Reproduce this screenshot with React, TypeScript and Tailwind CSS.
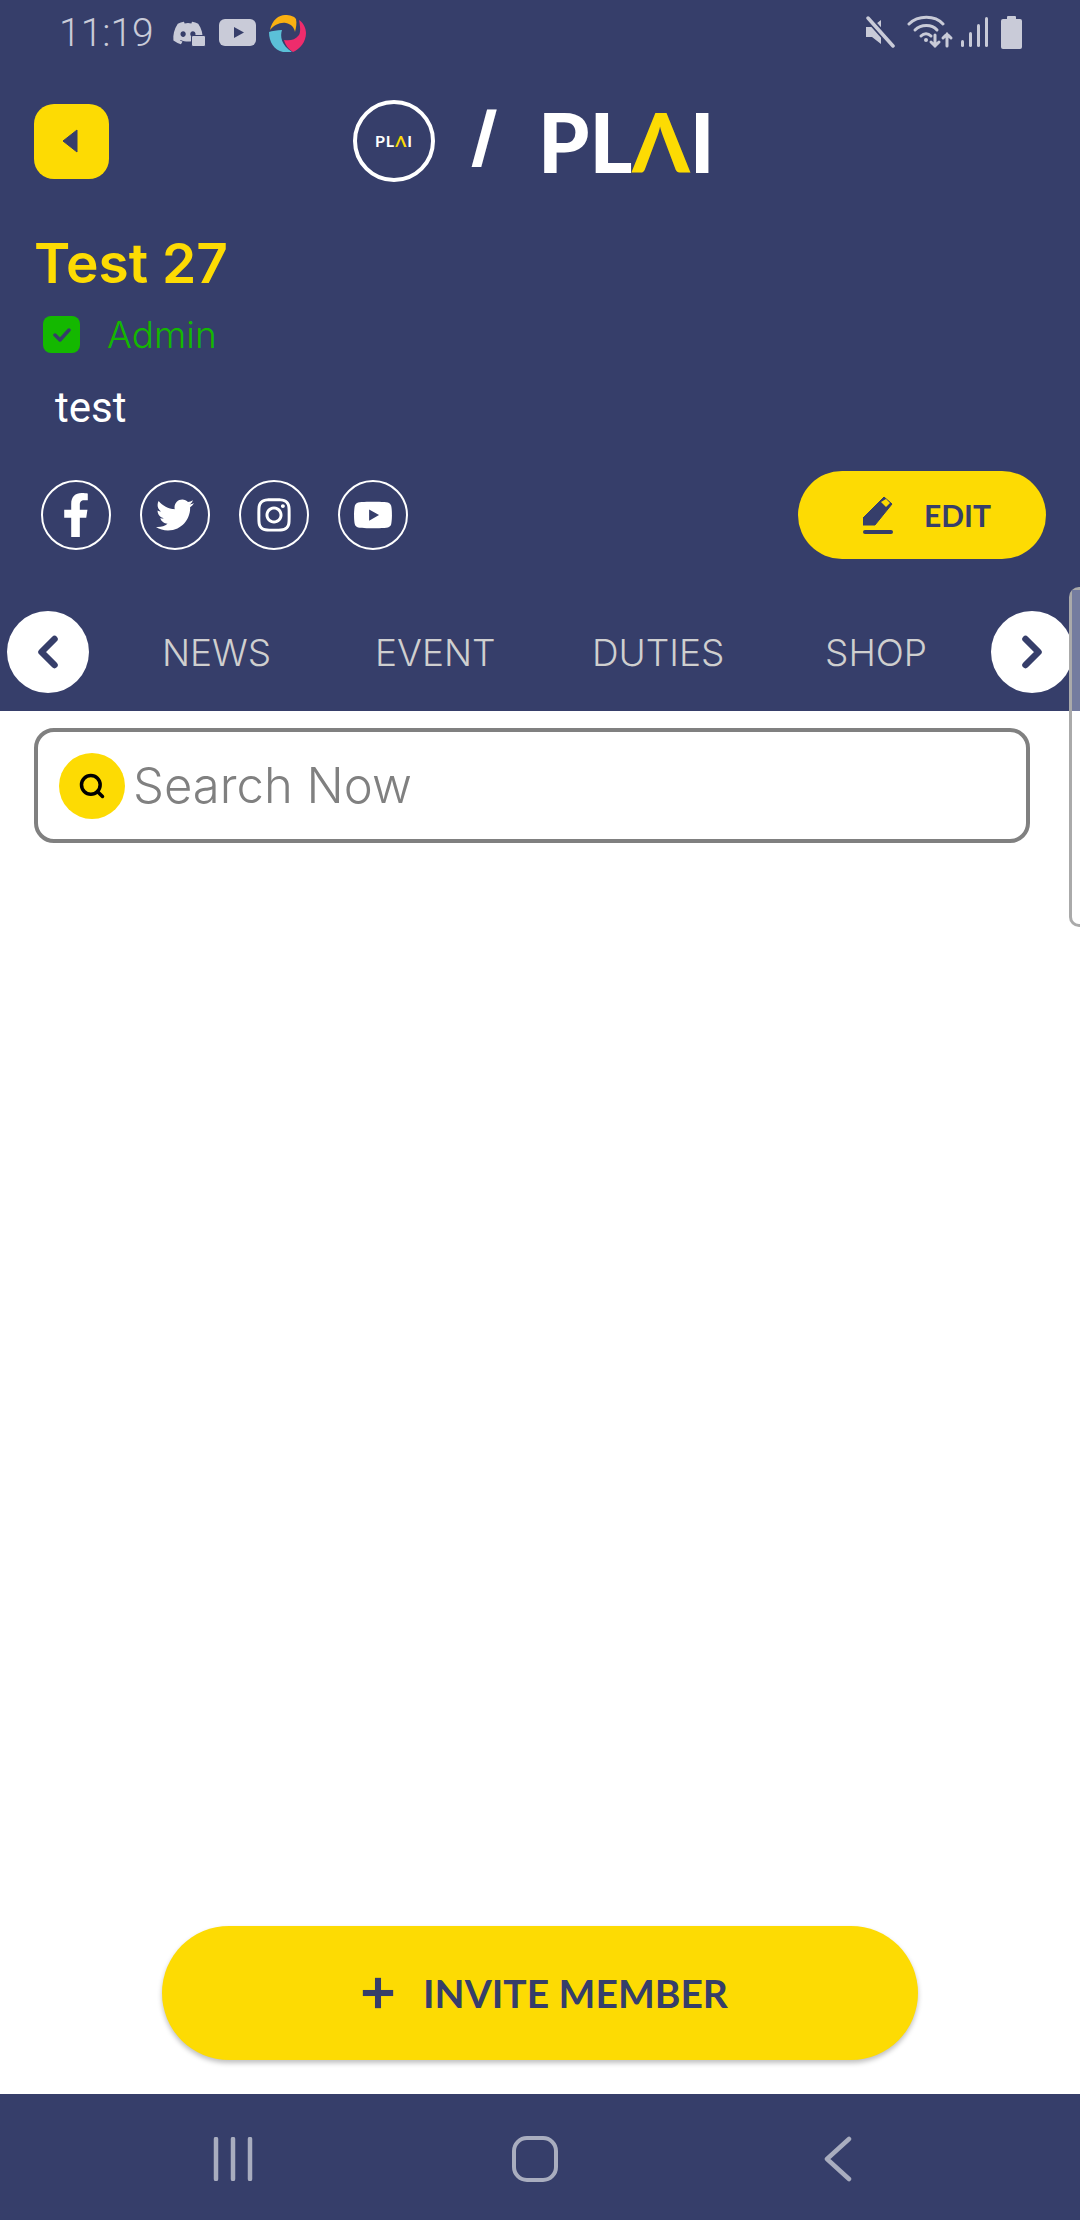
import { FC, ReactNode } from 'react';
import { ChevronLeft, ChevronRight, Plus, Search } from 'lucide-react';
import { FaDiscord, FaFacebookF, FaTwitter, FaYoutube, FaInstagram } from 'react-icons/fa';

const StatusBar: FC = () => (
  <div className="h-[66px] flex items-center pl-[59px] text-[#c9cbd8]">
    <span className="text-[39px] font-light w-[113px] leading-none" style={{ fontFamily: 'Roboto, sans-serif' }}>
      11:19
    </span>
    <div className="relative w-[34px] h-[28px]">
      <FaDiscord className="w-[32px] h-[28px]" />
      <div className="absolute right-0 bottom-0 w-[15px] h-[12px] rounded-[2px] bg-[#c9cbd8] border border-[#363e6a]" />
    </div>
    <svg width="37" height="28" viewBox="0 0 37 28" className="ml-[13px]">
      <rect width="37" height="27" rx="6" fill="#c9cbd8" />
      <path d="M15 8l10 5.5L15 19z" fill="#363e6a" />
    </svg>
    <svg width="37" height="37" viewBox="0 0 37 37" className="ml-[13px]">
      <path d="M1 15C3 5 10 0 16 0c5 0 9 1 11 4 1 4 0 9-1 13-1-5-4-8-9-9-6-1-12 2-16 7z" fill="#fbb011" />
      <path d="M30 5c5 3 7 9 7 13 0 9-6 16-13 19-5-3-8-8-9-12 6 1 11 0 15-5 2-3 1-10 0-15z" fill="#ee2c6c" />
      <path d="M0 17c3-1 8-2 13-2-2 6-1 15 10 22-3 0-6 0-9 0C5 35 0 27 0 17z" fill="#5bc0d8" />
    </svg>
    <div className="ml-auto flex items-center mr-[58px] -mt-[2px]">
      <svg width="30" height="32" viewBox="0 0 30 32">
        <path d="M1 11h6l9-7v24l-9-7H1z" fill="#c9cbd8" />
        <path d="M3 2l25 28" stroke="#363e6a" strokeWidth="7" />
        <path d="M3 2l25 28" stroke="#c9cbd8" strokeWidth="3.5" strokeLinecap="round" />
      </svg>
      <svg width="52" height="34" viewBox="0 0 52 34" className="ml-[12px]" fill="none" stroke="#c9cbd8" strokeWidth="3" strokeLinecap="round">
        <path d="M2 9c9-9 26-9 34 0" />
        <path d="M8 15c6-6 17-6 22 0" />
        <path d="M14 21c3-3 7-3 10 0" />
        <circle cx="19" cy="25" r="2" fill="#c9cbd8" stroke="none" />
        <path d="M28 20v11m-4-4l4 4 4-4" />
        <path d="M40 31V19m-4 4l4-4 4 4" />
      </svg>
      <svg width="30" height="32" viewBox="0 0 30 32" className="ml-[1px]" fill="#c9cbd8">
        <rect x="1" y="24" width="3" height="7" rx="1.5" />
        <rect x="9" y="16" width="3" height="15" rx="1.5" />
        <rect x="17" y="8" width="3" height="23" rx="1.5" />
        <rect x="25" y="1" width="3" height="30" rx="1.5" />
      </svg>
      <svg width="21" height="33" viewBox="0 0 21 33" className="ml-[11px]" fill="#c9cbd8">
        <rect x="6" width="9" height="4" rx="1" />
        <rect y="3" width="21" height="30" rx="2" />
      </svg>
    </div>
  </div>
);

const Logo: FC = () => (
  <div className="flex items-center ml-[244px] text-white">
    <div className="w-[82px] h-[82px] rounded-full border-[4px] border-white flex items-center justify-center text-[16px] font-bold tracking-[1px]" style={{ fontFamily: 'Lato, sans-serif' }}>
      PL<span className="text-[#fddb03]">Λ</span>I
    </div>
    <span className="ml-[36px] -mt-[10px] w-[24px] text-[66px] font-extrabold leading-none" style={{ fontFamily: 'Inter, sans-serif' }}>
      /
    </span>
    <div className="ml-[43px] text-[82px] font-black leading-none" style={{ fontFamily: 'Lato, sans-serif' }}>
      PL<span className="text-[#fddb03]">Λ</span>I
    </div>
  </div>
);

const SocialIcon: FC<{ children: ReactNode }> = ({ children }) => (
  <div className="w-[70px] h-[70px] rounded-full border-2 border-white text-white flex items-center justify-center">
    {children}
  </div>
);

const TabArrow: FC<{ children: ReactNode }> = ({ children }) => (
  <div className="w-[82px] h-[82px] rounded-full bg-white text-[#363e6a] flex items-center justify-center shrink-0">
    {children}
  </div>
);

const App: FC = () => {
  return (
    <div className="relative w-[1080px] h-[2220px] overflow-hidden bg-white flex flex-col" style={{ fontFamily: 'Inter, sans-serif' }}>
      <div className="bg-[#363e6a] h-[711px] shrink-0">
        <StatusBar />
        <div className="flex items-center pl-[34px] mt-[34px]">
          <div className="w-[75px] h-[75px] rounded-[20px] bg-[#fddb03] flex items-center justify-center shrink-0">
            <svg width="16" height="24" viewBox="0 0 16 24" className="mr-[3px]">
              <path d="M15 1L1 12l14 11z" fill="#363e6a" stroke="#363e6a" strokeLinejoin="round" />
            </svg>
          </div>
          <Logo />
        </div>

        <h1 className="mt-[51px] ml-[34px] text-[55px] font-semibold leading-[60px] text-[#fddb03]">Test 27</h1>
        <div className="flex items-center ml-[43px] mt-[23px]">
          <div className="w-[37px] h-[37px] rounded-[8px] bg-[#14b800] flex items-center justify-center">
            <svg width="18" height="14" viewBox="0 0 18 14" fill="none" stroke="#363e6a" strokeWidth="3.5" strokeLinecap="round" strokeLinejoin="round">
              <path d="M2 7l5 5 9-10" />
            </svg>
          </div>
          <span className="ml-[27px] text-[37px] font-light leading-none text-[#14b800]">Admin</span>
        </div>
        <p className="ml-[55px] mt-[31px] text-[42px] leading-[48px] text-white" style={{ fontFamily: 'Roboto, sans-serif' }}>
          test
        </p>

        <div className="flex items-center justify-between ml-[41px] mr-[34px] mt-[39px]">
          <div className="flex gap-[29px]">
            <SocialIcon><FaFacebookF className="w-[28px] h-[44px]" /></SocialIcon>
            <SocialIcon><FaTwitter className="w-[38px] h-[38px]" /></SocialIcon>
            <SocialIcon><FaInstagram className="w-[38px] h-[38px]" /></SocialIcon>
            <SocialIcon><FaYoutube className="w-[40px] h-[40px]" /></SocialIcon>
          </div>
          <div className="w-[248px] h-[88px] rounded-full bg-[#fddb03] flex items-center justify-center text-[#363e6a]">
            <svg width="30" height="38" viewBox="0 0 30 38" className="ml-[10px] mr-[31px]">
              <path d="M0 29v-7L21 1l8 7L12 29z" fill="#363e6a" strokeLinejoin="round" stroke="#363e6a" />
              <path d="M18 6l5-3 4 4-4 4z" fill="#fddb03" />
              <rect y="34" width="30" height="4" rx="2" fill="#363e6a" />
            </svg>
            <span className="text-[30px] font-bold" style={{ fontFamily: 'Lato, sans-serif' }}>EDIT</span>
          </div>
        </div>

        <div className="flex items-center ml-[7px] mt-[52px] text-[37px] font-light text-[#cfcfcf] leading-none">
          <TabArrow><ChevronLeft className="w-[52px] h-[52px]" strokeWidth={3} /></TabArrow>
          <span className="ml-[73px] w-[213px]">NEWS</span>
          <span className="w-[217px]">EVENT</span>
          <span className="w-[233px]">DUTIES</span>
          <span className="w-[166px]">SHOP</span>
          <TabArrow><ChevronRight className="w-[52px] h-[52px]" strokeWidth={3} /></TabArrow>
        </div>
      </div>

      <div className="ml-[34px] mr-[50px] mt-[17px] h-[115px] border-[4px] border-[#808080] rounded-[20px] flex items-center pl-[21px]">
        <div className="w-[66px] h-[66px] rounded-full bg-[#fddb03] flex items-center justify-center">
          <Search className="w-[28px] h-[28px] text-black" strokeWidth={3} />
        </div>
        <span className="ml-[8px] text-[49px] font-light text-[#808080]">Search Now</span>
      </div>

      <div className="mt-auto mb-[34px] ml-[162px] w-[756px] h-[134px] rounded-full bg-[#fddb03] shadow-[0_3px_5px_rgba(0,0,0,0.25)] flex items-center justify-center text-[#363e6a]">
        <Plus className="w-[52px] h-[52px] mr-[19px]" strokeWidth={2.8} strokeLinecap="butt" />
        <span className="text-[39px] font-bold leading-none" style={{ fontFamily: 'Lato, sans-serif' }}>INVITE MEMBER</span>
      </div>

      <div className="h-[126px] shrink-0 bg-[#363e6a] flex items-center pt-[4px]">
        <svg width="40" height="44" viewBox="0 0 40 44" className="ml-[213px]" stroke="#a9adbf" strokeWidth="4.5" strokeLinecap="round">
          <path d="M3 2v40M20 2v40M37 2v40" />
        </svg>
        <div className="ml-[259px] w-[46px] h-[46px] rounded-[15px] border-[4.5px] border-[#a9adbf]" />
        <svg width="28" height="46" viewBox="0 0 28 46" className="ml-[266px]" fill="none" stroke="#a9adbf" strokeWidth="4.5" strokeLinecap="round" strokeLinejoin="round">
          <path d="M25 3L3 23l22 20" />
        </svg>
      </div>

      <div className="absolute right-0 top-[587px] w-[11px] h-[340px] border-l-[3px] border-y-[3px] border-[#aaaaaa] rounded-l-[10px]">
        <div className="h-[121px] bg-[#747c9f]" />
      </div>
    </div>
  );
};

export default App;
